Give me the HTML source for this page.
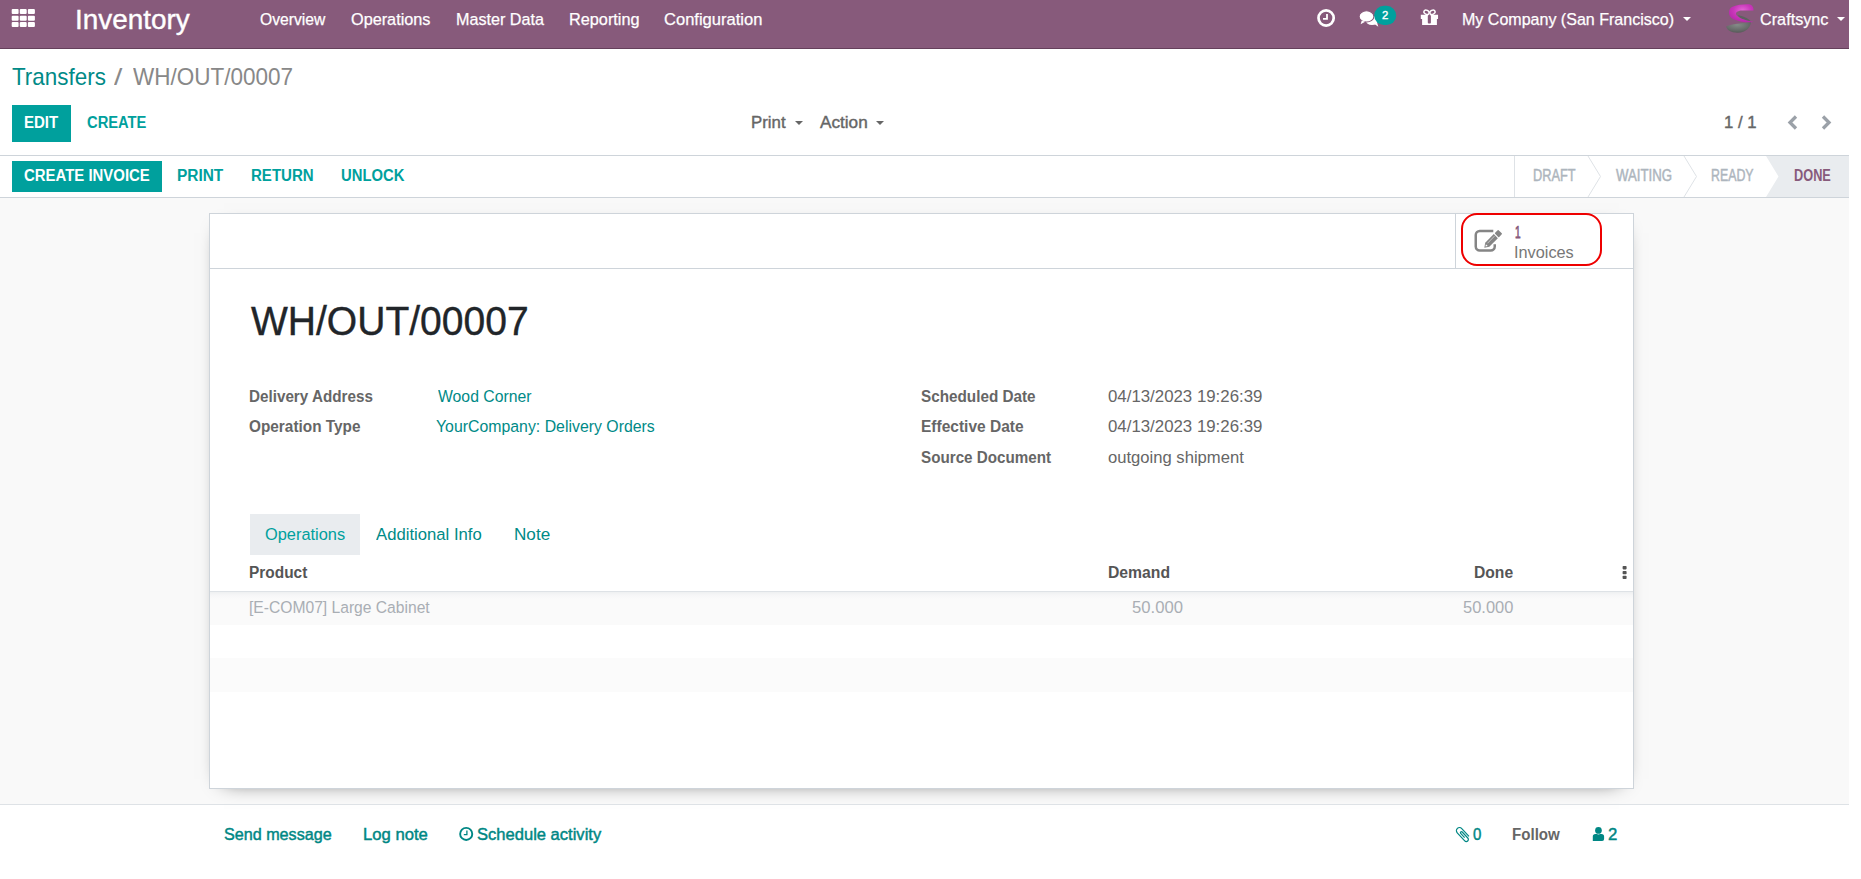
<!DOCTYPE html>
<html><head><meta charset="utf-8">
<style>
*{margin:0;padding:0;box-sizing:border-box}
html,body{width:1861px;height:879px;overflow:hidden;background:#fff;font-family:"Liberation Sans",sans-serif;color:#666}
.abs{position:absolute}
.t{position:absolute;white-space:nowrap;line-height:1;transform-origin:0 0}
.b{font-weight:bold}
.m{-webkit-text-stroke:0.45px currentColor}
.l{-webkit-text-stroke:0.4px currentColor}
.k{-webkit-text-stroke:0.25px currentColor}
.n{-webkit-text-stroke:0.75px currentColor}
.caret{position:absolute;width:0;height:0;border-left:4.2px solid transparent;border-right:4.2px solid transparent;border-top:4.2px solid #fff}
</style></head><body>
<!--GFX-->
<div class="abs" style="left:0;top:0;width:1849px;height:48px;background:#875A7B"></div>
<div class="abs" style="left:0;top:48px;width:1849px;height:1px;background:#65405b"></div>
<svg class="abs" style="left:0;top:0" width="1849" height="48" viewBox="0 0 1849 48">
  <!-- apps grid -->
  <g fill="#fff">
    <rect x="11.7" y="9" width="6.9" height="5.1" rx="1"/><rect x="19.8" y="9" width="6.9" height="5.1" rx="1"/><rect x="27.9" y="9" width="7" height="5.1" rx="1"/>
    <rect x="11.7" y="15.8" width="6.9" height="5" rx="1"/><rect x="19.8" y="15.8" width="6.9" height="5" rx="1"/><rect x="27.9" y="15.8" width="7" height="5" rx="1"/>
    <rect x="11.7" y="22" width="6.9" height="5" rx="1"/><rect x="19.8" y="22" width="6.9" height="5" rx="1"/><rect x="27.9" y="22" width="7" height="5" rx="1"/>
  </g>
  <!-- clock -->
  <circle cx="1326.1" cy="18" r="7.6" fill="none" stroke="#fff" stroke-width="2.7"/>
  <path d="M1327 13.9V18.85H1323" fill="none" stroke="#fff" stroke-width="1.8"/>
  <!-- comments -->
  <ellipse cx="1372" cy="20.5" rx="6.3" ry="4.6" fill="#fff"/>
  <path d="M1374.5 24l3.8 2.8-1.2-4z" fill="#fff"/>
  <ellipse cx="1366.5" cy="16.4" rx="7.4" ry="5.6" fill="#fff" stroke="#875A7B" stroke-width="1.1"/>
  <path d="M1361.8 20.4l-1.2 3.8 4.6-2.4z" fill="#fff"/>
  <!-- badge -->
  <rect x="1374.2" y="5.8" width="22" height="19.3" rx="9.65" fill="#00A09D"/>
  <!-- gift -->
  <path d="M1420.8 14.8H1438.05V18.9H1436.9V24.9H1422.1V18.9H1420.8Z" fill="#fff"/>
  <rect x="1427.8" y="15.1" width="3.1" height="8.4" rx="0.9" fill="#875A7B"/>
  <ellipse cx="1426.5" cy="12.3" rx="2.7" ry="2" transform="rotate(25 1426.5 12.3)" fill="none" stroke="#fff" stroke-width="1.4"/>
  <ellipse cx="1432.5" cy="12.3" rx="2.7" ry="2" transform="rotate(-25 1432.5 12.3)" fill="none" stroke="#fff" stroke-width="1.4"/>
  <!-- logo -->
  <defs>
    <radialGradient id="mg" cx="0.55" cy="0.35" r="0.6"><stop offset="0" stop-color="#e466d6"/><stop offset="0.6" stop-color="#c936ba"/><stop offset="1" stop-color="#b82aab"/></radialGradient>
    <radialGradient id="gg" cx="0.45" cy="0.3" r="0.7"><stop offset="0" stop-color="#858b88"/><stop offset="0.7" stop-color="#666a68"/><stop offset="1" stop-color="#575a59"/></radialGradient>
  </defs>
  <g transform="translate(1722 1)">
    <path fill="url(#gg)" d="M4 25.5C8 23.5 14 22.8 22 22C25 21.7 27.5 21 29 20.5C29 24 27 28 22 30.5C17 32.5 11 32 7 29.5C5.5 28.5 4.5 27 4 25.5Z"/>
    <path fill="#5d625f" d="M16 14C20 15 26 17 28.5 20C25 20 20 18.5 17 16Z"/>
    <path fill="url(#mg)" d="M10 6C15 3.5 22 3 27 3.2C30 3.5 31.8 6.5 31.5 9.5L20 9.6C16.5 9.8 13.8 11 14 13C14.3 15.5 19 18 28 20.3L31.5 20.8C28 21.8 20 21.5 12 18.5C8.5 17 6.8 14.5 7 11C7.2 8.5 8.3 7 10 6Z"/>
  </g>
</svg>
<div class="caret" style="left:1682.8px;top:16.9px"></div>
<div class="caret" style="left:1836.5px;top:16.9px"></div>

<div class="abs" style="left:12px;top:105px;width:59px;height:37px;background:#00A09D"></div>
<div class="caret" style="left:794.5px;top:120.5px;border-top-color:#666"></div>
<div class="caret" style="left:875.5px;top:120.5px;border-top-color:#666"></div>
<svg class="abs" style="left:1780px;top:108px" width="60" height="28" viewBox="1780 108 60 28">
  <path d="M1796 116.5L1790 122.5L1796 128.5" fill="none" stroke="#9ba1a8" stroke-width="3.3"/>
  <path d="M1823 116.5L1829 122.5L1823 128.5" fill="none" stroke="#9ba1a8" stroke-width="3.3"/>
</svg>
<div class="abs" style="left:0;top:155px;width:1849px;height:1px;background:#ced4da"></div>

<div class="abs" style="left:12px;top:161px;width:150px;height:31px;background:#00A09D"></div>
<svg class="abs" style="left:1514px;top:156px" width="335" height="41" viewBox="0 0 335 41">
  <path d="M252 0H335V41H252L264.5 20.5z" fill="#e9ecef"/>
  <path d="M0.5 0V41" stroke="#dee2e6" stroke-width="1"/>
  <path d="M74 0L86.5 20.5L74 41" fill="none" stroke="#dee2e6" stroke-width="1"/>
  <path d="M170 0L182.5 20.5L170 41" fill="none" stroke="#dee2e6" stroke-width="1"/>
</svg>
<div class="abs" style="left:0;top:197px;width:1849px;height:1px;background:#ced4da"></div>

<div class="abs" style="left:0;top:198px;width:1849px;height:606px;background:#f9f9f9"></div>
<div class="abs" style="left:209px;top:213px;width:1425px;height:576px;background:#fff;border:1px solid #ced4da;box-shadow:0 5px 20px -15px #000"></div>
<div class="abs" style="left:210px;top:268px;width:1423px;height:1px;background:#ced4da"></div>
<div class="abs" style="left:1455px;top:214px;width:1px;height:54px;background:#ced4da"></div>

<svg class="abs" style="left:1470px;top:226px" width="36" height="30" viewBox="1470 226 36 30">
  <path d="M1493.3 231.05H1479.75A4 4 0 0 0 1475.75 235.05V246.55A4 4 0 0 0 1479.75 250.55H1490.75A4 4 0 0 0 1494.75 246.55V244.3" fill="none" stroke="#858585" stroke-width="2.5"/>
  <g transform="translate(1484.3 247.7) rotate(-45)">
    <path d="M0 0L4.2 -2.9H16.3V2.9H4.2Z" fill="#858585"/>
    <rect x="17.5" y="-2.9" width="5" height="5.8" rx="0.7" fill="#858585"/>
    <path d="M1.6 0L3.6 -1.3V1.3Z" fill="#fff"/>
    <rect x="5.5" y="-1.3" width="10" height="0.7" fill="#fff" opacity="0.55"/>
  </g>
</svg>
<div class="abs" style="left:1461px;top:213px;width:141px;height:53px;border:2px solid #ee0000;border-radius:16px"></div>

<div class="abs" style="left:250px;top:514px;width:110px;height:41px;background:#e9ecef"></div>
<svg class="abs" style="left:1612px;top:560px" width="24" height="25" viewBox="1612 560 24 25">
  <g fill="#555"><rect x="1622.6" y="566" width="4" height="3.4" rx="0.8"/><rect x="1622.6" y="570.9" width="4" height="3.3" rx="0.8"/><rect x="1622.6" y="575.7" width="4" height="3.3" rx="0.8"/></g>
</svg>
<div class="abs" style="left:210px;top:591px;width:1423px;height:1px;background:#dee2e6"></div>
<div class="abs" style="left:210px;top:592px;width:1423px;height:33px;background:linear-gradient(#eef0f1 0px,#f6f6f7 3px,#fafafa 7px,#fafafa 100%)"></div>
<div class="abs" style="left:210px;top:658px;width:1423px;height:34px;background:#fbfbfb"></div>

<div class="abs" style="left:0;top:804px;width:1849px;height:1px;background:#dee2e6"></div>
<svg class="abs" style="left:440px;top:815px" width="1200" height="35" viewBox="440 815 1200 35">
  <circle cx="466.2" cy="833.9" r="6.05" fill="none" stroke="#008784" stroke-width="1.9"/>
  <path d="M466.9 830.5V834.6H463.8" fill="none" stroke="#008784" stroke-width="1.3"/>
  <g transform="translate(1459.5 830.7) rotate(47)">
    <path d="M10.6 -3.1H0A3.1 3.1 0 0 0 0 3.1H11A2.1 2.1 0 0 0 11 -1.1H2.8A1.05 1.05 0 0 0 2.8 1H8.6" fill="none" stroke="#008784" stroke-width="1.2"/>
  </g>
  <circle cx="1598.45" cy="830.4" r="3.35" fill="#008784"/>
  <path d="M1592.8 841.1V836.6A2.6 2.6 0 0 1 1595.4 834H1596.8C1597.4 834.5 1599.5 834.5 1600.1 834H1601.5A2.6 2.6 0 0 1 1604.1 836.6V839.1A2 2 0 0 1 1602.1 841.1Z" fill="#008784"/>
</svg>
<!--/GFX-->
<div class="t l" style="left:75.10px;top:4.80px;font-size:28.40px;color:#fff;transform:scaleX(0.9827)">Inventory</div>
<div class="t k" style="left:260.34px;top:11.99px;font-size:16.80px;color:#fff;transform:scaleX(0.9338)">Overview</div>
<div class="t k" style="left:351.42px;top:11.99px;font-size:16.80px;color:#fff;transform:scaleX(0.9683)">Operations</div>
<div class="t k" style="left:455.50px;top:11.99px;font-size:16.80px;color:#fff;transform:scaleX(0.9625)">Master Data</div>
<div class="t k" style="left:569.00px;top:11.99px;font-size:16.80px;color:#fff;transform:scaleX(0.9693)">Reporting</div>
<div class="t k" style="left:664.00px;top:11.99px;font-size:16.80px;color:#fff;transform:scaleX(0.9859)">Configuration</div>
<div class="t k" style="left:1462.42px;top:11.54px;font-size:16.80px;color:#fff;transform:scaleX(0.9551)">My Company (San Francisco)</div>
<div class="t k" style="left:1759.66px;top:11.99px;font-size:16.80px;color:#fff;transform:scaleX(0.9663)">Craftsync</div>
<div class="t l" style="left:1381.90px;top:10.20px;font-size:11.40px;color:#fff;transform:scaleX(0.9932)">2</div>
<div class="t" style="left:12.24px;top:66.30px;font-size:23.20px;color:#008a87;transform:scaleX(0.9672)">Transfers</div>
<div class="t" style="left:114.40px;top:66.30px;font-size:23.20px;color:#8a8a8a;transform:scaleX(1.2949)">/</div>
<div class="t" style="left:132.64px;top:66.30px;font-size:23.20px;color:#888;transform:scaleX(0.9708)">WH/OUT/00007</div>
<div class="t b" style="left:23.50px;top:115.00px;font-size:16.80px;color:#fff;transform:scaleX(0.8947)">EDIT</div>
<div class="t b" style="left:87.00px;top:115.00px;font-size:16.80px;color:#00A09D;transform:scaleX(0.8772)">CREATE</div>
<div class="t l" style="left:751.00px;top:115.00px;font-size:16.80px;color:#666;transform:scaleX(1.0017)">Print</div>
<div class="t l" style="left:819.90px;top:115.00px;font-size:16.80px;color:#666;transform:scaleX(1.0230)">Action</div>
<div class="t l" style="left:1724.00px;top:115.00px;font-size:16.80px;color:#666;transform:scaleX(0.9971)">1 / 1</div>
<div class="t b" style="left:23.50px;top:167.97px;font-size:16.80px;color:#fff;transform:scaleX(0.8894)">CREATE INVOICE</div>
<div class="t b" style="left:176.75px;top:167.97px;font-size:16.80px;color:#00A09D;transform:scaleX(0.9195)">PRINT</div>
<div class="t b" style="left:251.00px;top:167.97px;font-size:16.80px;color:#00A09D;transform:scaleX(0.8971)">RETURN</div>
<div class="t b" style="left:340.75px;top:167.97px;font-size:16.80px;color:#00A09D;transform:scaleX(0.8833)">UNLOCK</div>
<div class="t m" style="left:1533.00px;top:167.69px;font-size:15.60px;color:#adb5bd;transform:scaleX(0.8182)">DRAFT</div>
<div class="t m" style="left:1616.48px;top:167.69px;font-size:15.60px;color:#adb5bd;transform:scaleX(0.8489)">WAITING</div>
<div class="t m" style="left:1711.00px;top:167.69px;font-size:15.60px;color:#adb5bd;transform:scaleX(0.7926)">READY</div>
<div class="t b" style="left:1793.50px;top:167.69px;font-size:15.60px;color:#875A7B;transform:scaleX(0.8186)">DONE</div>
<div class="t n" style="left:1514.98px;top:224.98px;font-size:16.80px;color:#875A7B;transform:scaleX(0.6047)">1</div>
<div class="t" style="left:1514.08px;top:245.00px;font-size:16.80px;color:#777;transform:scaleX(0.9707)">Invoices</div>
<div class="t l" style="left:250.90px;top:301.42px;font-size:41.00px;color:#212529;transform:scaleX(0.9519)">WH/OUT/00007</div>
<div class="t b" style="left:249.00px;top:389.00px;font-size:16.80px;color:#666;transform:scaleX(0.9075)">Delivery Address</div>
<div class="t" style="left:437.90px;top:389.00px;font-size:16.80px;color:#008a87;transform:scaleX(0.9394)">Wood Corner</div>
<div class="t b" style="left:249.00px;top:419.00px;font-size:16.80px;color:#666;transform:scaleX(0.9152)">Operation Type</div>
<div class="t" style="left:436.34px;top:419.00px;font-size:16.80px;color:#008a87;transform:scaleX(0.9445)">YourCompany: Delivery Orders</div>
<div class="t b" style="left:920.50px;top:389.00px;font-size:16.80px;color:#666;transform:scaleX(0.9102)">Scheduled Date</div>
<div class="t" style="left:1108.00px;top:389.00px;font-size:16.80px;color:#666;transform:scaleX(1.0028)">04/13/2023 19:26:39</div>
<div class="t b" style="left:920.50px;top:419.00px;font-size:16.80px;color:#666;transform:scaleX(0.9239)">Effective Date</div>
<div class="t" style="left:1108.00px;top:419.00px;font-size:16.80px;color:#666;transform:scaleX(1.0028)">04/13/2023 19:26:39</div>
<div class="t b" style="left:920.50px;top:450.00px;font-size:16.80px;color:#666;transform:scaleX(0.9064)">Source Document</div>
<div class="t" style="left:1108.00px;top:450.00px;font-size:16.80px;color:#666;transform:scaleX(0.9899)">outgoing shipment</div>
<div class="t" style="left:265.16px;top:527.03px;font-size:16.80px;color:#00A09D;transform:scaleX(0.9756)">Operations</div>
<div class="t" style="left:376.40px;top:527.03px;font-size:16.80px;color:#008a87;transform:scaleX(0.9945)">Additional Info</div>
<div class="t" style="left:513.66px;top:527.03px;font-size:16.80px;color:#008a87;transform:scaleX(1.0204)">Note</div>
<div class="t b" style="left:249.00px;top:565.00px;font-size:16.80px;color:#555;transform:scaleX(0.9194)">Product</div>
<div class="t b" style="left:1108.34px;top:565.00px;font-size:16.80px;color:#555;transform:scaleX(0.9375)">Demand</div>
<div class="t b" style="left:1474.42px;top:565.00px;font-size:16.80px;color:#555;transform:scaleX(0.9322)">Done</div>
<div class="t" style="left:248.84px;top:600.00px;font-size:16.80px;color:#a9aeb4;transform:scaleX(0.9314)">[E-COM07] Large Cabinet</div>
<div class="t" style="left:1132.42px;top:600.00px;font-size:16.80px;color:#a9aeb4;transform:scaleX(0.9929)">50.000</div>
<div class="t" style="left:1463.16px;top:600.00px;font-size:16.80px;color:#a9aeb4;transform:scaleX(0.9815)">50.000</div>
<div class="t m" style="left:224.16px;top:827.04px;font-size:16.80px;color:#008784;transform:scaleX(0.9616)">Send message</div>
<div class="t m" style="left:362.84px;top:827.04px;font-size:16.80px;color:#008784;transform:scaleX(0.9934)">Log note</div>
<div class="t m" style="left:476.58px;top:827.04px;font-size:16.80px;color:#008784;transform:scaleX(0.9862)">Schedule activity</div>
<div class="t m" style="left:1473.32px;top:827.03px;font-size:16.80px;color:#008784;transform:scaleX(0.8950)">0</div>
<div class="t b" style="left:1511.84px;top:827.03px;font-size:16.80px;color:#666;transform:scaleX(0.9006)">Follow</div>
<div class="t m" style="left:1608.00px;top:827.03px;font-size:16.80px;color:#008784;transform:scaleX(1.0000)">2</div>
</body></html>
